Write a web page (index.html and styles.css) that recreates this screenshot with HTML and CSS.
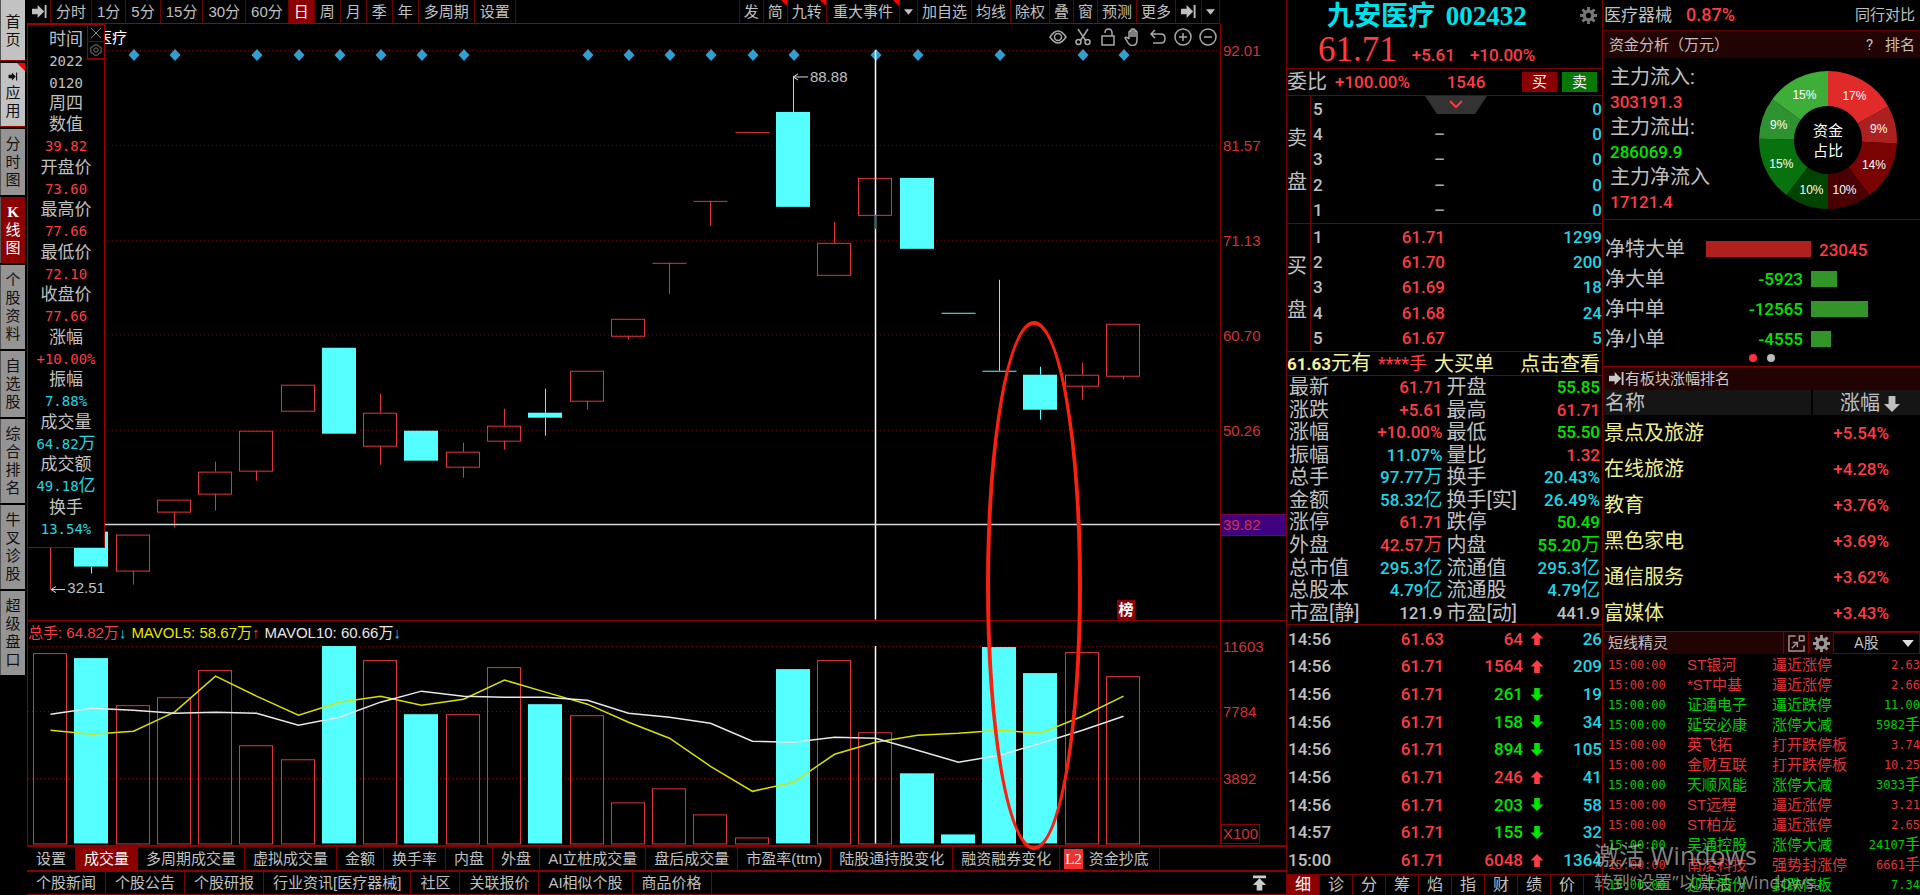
FILE: index.html
```html
<!DOCTYPE html>
<html lang="zh-CN">
<head>
<meta charset="utf-8">
<title>九安医疗 002432</title>
<link rel="stylesheet" href="styles.css">
</head>
<body>
<svg class="defs" aria-hidden="true">
  <symbol id="skip" viewBox="0 0 18 16"><path d="M1 5h6V1l7 7-7 7v-4H1z" fill="currentColor"/><path d="M15.500 1v14" stroke="currentColor" stroke-width="2"/></symbol>
  <symbol id="down" viewBox="0 0 10 6"><path d="M0 0h10L5 6z" fill="currentColor"/></symbol>
  <symbol id="gear" viewBox="0 0 18 18"><circle cx="9" cy="9" r="4.500" fill="none" stroke="currentColor" stroke-width="3.400"/><path d="M9 0v4M9 14v4M0 9h4M14 9h4M2.600 2.600l3 3M12.400 12.400l3 3M2.600 15.400l3-3M12.400 5.600l3-3" stroke="currentColor" stroke-width="3"/></symbol>
  <symbol id="up-arrow" viewBox="0 0 14 14"><path d="M7 0l7 7h-4v7H4V7H0z" fill="currentColor"/></symbol>
  <symbol id="down-arrow" viewBox="0 0 14 14"><path d="M7 14l7-7h-4V0H4v7H0z" fill="currentColor"/></symbol>
</svg>
<div class="app">
  <nav class="side">
    <a href="#" class="light home"><span>首页</span></a>
    <a href="#" class="light apps"><svg class="mini"><use href="#skip"/></svg><span>应用</span></a>
    <a href="#"><span>分时图</span></a>
    <a href="#" class="active"><span><b>K</b>线图</span></a>
    <a href="#"><span>个股资料</span></a>
    <a href="#"><span>自选股</span></a>
    <a href="#"><span>综合排名</span></a>
    <a href="#"><span>牛叉诊股</span></a>
    <a href="#"><span>超级盘口</span></a>
  </nav>

  <main class="main">
    <div class="toolbar">
      <div class="group">
        <button class="first" aria-label="展开"><svg class="i-skip"><use href="#skip"/></svg></button>
        <button>分时</button><button>1分</button><button>5分</button><button>15分</button><button>30分</button><button>60分</button><button class="active">日</button><button>周</button><button>月</button><button>季</button><button>年</button><button>多周期</button><button>设置</button>
      </div>
      <div class="group tight">
        <button>发</button><button class="hot">简</button><button class="hot">九转</button><button class="hot wide">重大事件</button><button aria-label="事件菜单"><svg class="i-down"><use href="#down"/></svg></button><button>加自选</button><button>均线</button><button>除权</button><button>叠</button><button>窗</button><button>预测</button><button>更多</button><button aria-label="收起"><svg class="i-skip"><use href="#skip"/></svg></button><button aria-label="更多菜单"><svg class="i-down"><use href="#down"/></svg></button>
      </div>
    </div>

    <div class="charts">
      <section class="pane price">
        <div class="plot">
          <svg id="price" class="canvas" viewBox="28 24 1192 596" preserveAspectRatio="none"></svg>
          <div class="stock-name">九安医疗</div>
          <div class="tools">
            <button aria-label="显示"><svg viewBox="0 0 18 18"><path d="M1 9q8-12 16 0q-8 12-16 0z"/><circle cx="9" cy="9" r="3.500"/></svg></button>
            <button aria-label="剪切"><svg viewBox="0 0 18 18"><path d="M4 1l8 12M14 1L6 13"/><circle cx="4.500" cy="14" r="2.500"/><circle cx="13.500" cy="14" r="2.500"/></svg></button>
            <button aria-label="锁定"><svg viewBox="0 0 18 18"><path d="M3 8h12v9H3zM6 5q0-4 3.500-4T13 5v3"/></svg></button>
            <button aria-label="拖动"><svg viewBox="0 0 18 18"><path d="M5 11V4q1-2 2 0v5V2q1-2 2 0v7V2q1-2 2 0v7V4q1-2 2 0v8q0 5-4 5.500Q5 18 3 13L1 10q1-2 4 1"/></svg></button>
            <button aria-label="撤销"><svg viewBox="0 0 18 18"><path d="M6 2L2 6l4 4M2 6h10q4 0 4 4.500T12 15H4"/></svg></button>
            <button aria-label="放大"><svg viewBox="0 0 18 18"><circle cx="9" cy="9" r="8"/><path d="M9 5v8M5 9h8"/></svg></button>
            <button aria-label="缩小"><svg viewBox="0 0 18 18"><circle cx="9" cy="9" r="8"/><path d="M5 9h8"/></svg></button>
          </div>
          <span class="mark high">88.88</span>
          <span class="mark low">32.51</span>
          <span class="badge">榜</span>
          <aside class="info">
            <div class="info-btns"><button aria-label="关闭"><svg viewBox="0 0 12 12"><path d="M1 1l10 10M11 1L1 11"/></svg></button><button aria-label="面板设置"><svg viewBox="0 0 14 14"><path d="M5 1h4l1 2 3 1v6l-3 1-1 2H5l-1-2-3-1V4l3-1z"/><circle cx="7" cy="7" r="2.500"/></svg></button></div>
            <span>时间</span><span class="n">2022</span><span class="n">0120</span><span>周四</span>
            <span>数值</span><span class="n r">39.82</span>
            <span>开盘价</span><span class="n r">73.60</span>
            <span>最高价</span><span class="n r">77.66</span>
            <span>最低价</span><span class="n r">72.10</span>
            <span>收盘价</span><span class="n r">77.66</span>
            <span>涨幅</span><span class="n r">+10.00%</span>
            <span>振幅</span><span class="n c">7.88%</span>
            <span>成交量</span><span class="n c">64.82<i>万</i></span>
            <span>成交额</span><span class="n c">49.18<i>亿</i></span>
            <span>换手</span><span class="n c">13.54%</span>
          </aside>
        </div>
        <div class="axis" id="price-axis"></div>
      </section>
      <section class="pane volume">
        <div class="plot">
          <svg id="volume" class="canvas" viewBox="28 621 1192 224" preserveAspectRatio="none"></svg>
          <div class="legend"><span class="r">总手: 64.82万<i class="c">↓</i></span><span class="y">MAVOL5: 58.67万<i class="r">↑</i></span><span class="w">MAVOL10: 60.66万<i class="c">↓</i></span></div>
        </div>
        <div class="axis" id="volume-axis"><span class="unit">X100</span></div>
      </section>
      <div class="ring"></div>
    </div>

    <nav class="tabs indicators">
      <button>设置</button><button class="active">成交量</button><button>多周期成交量</button><button>虚拟成交量</button><button>金额</button><button>换手率</button><button>内盘</button><button>外盘</button><button>AI立桩成交量</button><button>盘后成交量</button><button>市盈率(ttm)</button><button>陆股通持股变化</button><button>融资融券变化</button><button class="l2"><em>L2</em>资金抄底</button>
    </nav>
    <nav class="tabs news">
      <a href="#">个股新闻</a><a href="#">个股公告</a><a href="#">个股研报</a><a href="#">行业资讯[医疗器械]</a><a href="#">社区</a><a href="#">关联报价</a><a href="#">AI相似个股</a><a href="#">商品价格</a>
      <button class="top" aria-label="展开面板"><svg viewBox="0 0 16 16"><path d="M1 0h14v3H1zM8 3l7 7h-4v6H5v-6H1z" fill="currentColor"/></svg></button>
    </nav>
  </main>

  <section class="quote">
    <header>
      <h1>九安医疗 <span>002432</span></h1>
      <button class="gear" aria-label="设置"><svg><use href="#gear"/></svg></button>
      <p class="last"><strong>61.71</strong><span>+5.61</span><span>+10.00%</span></p>
    </header>
    <div class="ratio"><span class="lbl">委比</span><b>+100.00%</b><b class="cnt">1546</b><button class="buy">买</button><button class="sell">卖</button></div>
    <div class="depth">
      <div class="side-lbl"><span>卖</span><span>盘</span></div>
      <table>
        <tr><th>5</th><td></td><td>0</td></tr>
        <tr><th>4</th><td class="dash">–</td><td>0</td></tr>
        <tr><th>3</th><td class="dash">–</td><td>0</td></tr>
        <tr><th>2</th><td class="dash">–</td><td>0</td></tr>
        <tr><th>1</th><td class="dash">–</td><td>0</td></tr>
      </table>
      <button class="fold" aria-label="展开卖盘"><svg viewBox="0 0 62 18"><path d="M0 0h62L50 18H12z" fill="#333"/><path d="M25 5l6 6 6-6" fill="none" stroke="#ff3a3a" stroke-width="2"/></svg></button>
    </div>
    <div class="depth">
      <div class="side-lbl"><span>买</span><span>盘</span></div>
      <table>
        <tr><th>1</th><td>61.71</td><td>1299</td></tr>
        <tr><th>2</th><td>61.70</td><td>200</td></tr>
        <tr><th>3</th><td>61.69</td><td>18</td></tr>
        <tr><th>4</th><td>61.68</td><td>24</td></tr>
        <tr><th>5</th><td>61.67</td><td>5</td></tr>
      </table>
    </div>
    <div class="promo"><span><b>61.63</b>元有</span><span class="r">****手</span><span>大买单</span><a href="#">点击查看</a></div>
    <table class="stats">
      <tr><th>最新</th><td class="r">61.71</td><th>开盘</th><td class="g">55.85</td></tr>
      <tr><th>涨跌</th><td class="r">+5.61</td><th>最高</th><td class="r">61.71</td></tr>
      <tr><th>涨幅</th><td class="r">+10.00%</td><th>最低</th><td class="g">55.50</td></tr>
      <tr><th>振幅</th><td class="c">11.07%</td><th>量比</th><td class="r">1.32</td></tr>
      <tr><th>总手</th><td class="c">97.77<i>万</i></td><th>换手</th><td class="c">20.43%</td></tr>
      <tr><th>金额</th><td class="c">58.32<i>亿</i></td><th>换手[实]</th><td class="c">26.49%</td></tr>
      <tr><th>涨停</th><td class="r">61.71</td><th>跌停</th><td class="g">50.49</td></tr>
      <tr><th>外盘</th><td class="r">42.57<i>万</i></td><th>内盘</th><td class="g">55.20<i>万</i></td></tr>
      <tr><th>总市值</th><td class="c">295.3<i>亿</i></td><th>流通值</th><td class="c">295.3<i>亿</i></td></tr>
      <tr><th>总股本</th><td class="c">4.79<i>亿</i></td><th>流通股</th><td class="c">4.79<i>亿</i></td></tr>
      <tr><th>市盈[静]</th><td>121.9</td><th>市盈[动]</th><td>441.9</td></tr>
    </table>
    <table class="ticks">
      <tr><td>14:56</td><td>61.63</td><td class="r">64</td><td class="r"><svg><use href="#up-arrow"/></svg></td><td>26</td></tr>
      <tr><td>14:56</td><td>61.71</td><td class="r">1564</td><td class="r"><svg><use href="#up-arrow"/></svg></td><td>209</td></tr>
      <tr><td>14:56</td><td>61.71</td><td class="g">261</td><td class="g"><svg><use href="#down-arrow"/></svg></td><td>19</td></tr>
      <tr><td>14:56</td><td>61.71</td><td class="g">158</td><td class="g"><svg><use href="#down-arrow"/></svg></td><td>34</td></tr>
      <tr><td>14:56</td><td>61.71</td><td class="g">894</td><td class="g"><svg><use href="#down-arrow"/></svg></td><td>105</td></tr>
      <tr><td>14:56</td><td>61.71</td><td class="r">246</td><td class="r"><svg><use href="#up-arrow"/></svg></td><td>41</td></tr>
      <tr><td>14:56</td><td>61.71</td><td class="g">203</td><td class="g"><svg><use href="#down-arrow"/></svg></td><td>58</td></tr>
      <tr><td>14:57</td><td>61.71</td><td class="g">155</td><td class="g"><svg><use href="#down-arrow"/></svg></td><td>32</td></tr>
      <tr><td>15:00</td><td>61.71</td><td class="r">6048</td><td class="r"><svg><use href="#up-arrow"/></svg></td><td>1364</td></tr>
    </table>
    <nav class="qtabs"><button class="active">细</button><button>诊</button><button>分</button><button>筹</button><button>焰</button><button>指</button><button>财</button><button>绩</button><button>价</button></nav>
  </section>

  <section class="market">
    <div class="sector"><span>医疗器械</span><b>0.87%</b><a href="#">同行对比</a></div>
    <div class="bar-head fund-head"><span>资金分析（万元）</span><span class="help">?</span><a href="#">排名</a></div>
    <div class="fund">
      <dl>
        <dt>主力流入:</dt><dd class="r">303191.3</dd>
        <dt>主力流出:</dt><dd class="g">286069.9</dd>
        <dt>主力净流入</dt><dd class="r">17121.4</dd>
      </dl>
      <svg id="donut" class="donut" viewBox="-70 -70 140 140"></svg>
    </div>
    <div class="net">
      <div><span>净特大单</span><span class="left"><i class="fill red" style="width:105px"></i></span><span class="right"><b class="r">23045</b></span></div>
      <div><span>净大单</span><span class="left"><b class="g">-5923</b></span><span class="right"><i class="fill green" style="width:26px"></i></span></div>
      <div><span>净中单</span><span class="left"><b class="g">-12565</b></span><span class="right"><i class="fill green" style="width:57px"></i></span></div>
      <div><span>净小单</span><span class="left"><b class="g">-4555</b></span><span class="right"><i class="fill green" style="width:20px"></i></span></div>
      <p class="dots"><i class="on"></i><i></i></p>
    </div>
    <div class="bar-head rank-head"><svg class="i-skip"><use href="#skip"/></svg><span>有板块涨幅排名</span></div>
    <table class="rank">
      <thead><tr><th>名称</th><th>涨幅<svg><use href="#down-arrow"/></svg></th></tr></thead>
      <tbody>
      <tr><td>景点及旅游</td><td>+5.54%</td></tr>
      <tr><td>在线旅游</td><td>+4.28%</td></tr>
      <tr><td>教育</td><td>+3.76%</td></tr>
      <tr><td>黑色家电</td><td>+3.69%</td></tr>
      <tr><td>通信服务</td><td>+3.62%</td></tr>
      <tr><td>富媒体</td><td>+3.43%</td></tr>
      </tbody>
    </table>
    <div class="bar-head spirit-head"><span>短线精灵</span>
      <button aria-label="弹出"><svg viewBox="0 0 18 18"><path d="M8 1H1v16h16v-6M12 1h5v5h-5zM4 14l5-5M5 8h5v5" fill="none" stroke="currentColor" stroke-width="1.500"/></svg></button>
      <button aria-label="设置"><svg viewBox="0 0 18 18"><use href="#gear"/></svg></button>
      <label class="pick"><select aria-label="市场"><option>A股</option></select><svg class="i-down"><use href="#down"/></svg></label>
    </div>
    <table class="spirit">
      <tr class="r"><td>15:00:00</td><td>ST银河</td><td>逼近涨停</td><td>2.63</td></tr>
      <tr class="r"><td>15:00:00</td><td>*ST中基</td><td>逼近涨停</td><td>2.66</td></tr>
      <tr class="g"><td>15:00:00</td><td>证通电子</td><td>逼近跌停</td><td>11.00</td></tr>
      <tr class="g"><td>15:00:00</td><td>延安必康</td><td>涨停大减</td><td>5982<i>手</i></td></tr>
      <tr class="r"><td>15:00:00</td><td>英飞拓</td><td>打开跌停板</td><td>3.74</td></tr>
      <tr class="r"><td>15:00:00</td><td>金财互联</td><td>打开跌停板</td><td>10.25</td></tr>
      <tr class="g"><td>15:00:00</td><td>天顺风能</td><td>涨停大减</td><td>3033<i>手</i></td></tr>
      <tr class="r"><td>15:00:00</td><td>ST远程</td><td>逼近涨停</td><td>3.21</td></tr>
      <tr class="r"><td>15:00:00</td><td>ST柏龙</td><td>逼近涨停</td><td>2.65</td></tr>
      <tr class="g"><td>15:00:00</td><td>吴通控股</td><td>涨停大减</td><td>24107<i>手</i></td></tr>
      <tr class="r"><td>15:00:00</td><td>南凌科技</td><td>强势封涨停</td><td>6661<i>手</i></td></tr>
      <tr class="g"><td>15:00:00</td><td>迎丰股份</td><td>封跌停板</td><td>7.34</td></tr>
    </table>
    <div class="watermark"><p>激活 Windows</p><p class="sub">转到“设置”以激活 Windows。</p></div>
  </section>
</div>
<script src="chart.js"></script>
</body>
</html>
```
FILE: styles.css
```css
* { box-sizing: border-box; }
body { margin: 0; background: #000; color: #c0c0c0; font-family: "Liberation Sans", "Noto Sans CJK SC", sans-serif; font-size: 15px; line-height: 20px; }
button, select { font: inherit; color: inherit; background: none; border: 0; border-radius: 0; padding: 0; margin: 0; }
a { color: inherit; text-decoration: none; }
p, h1, dl, dd { margin: 0; }
i, em { font-style: normal; }
table { border-collapse: collapse; width: 100%; }
th, td { padding: 0; font-weight: normal; text-align: left; }
svg { display: block; }
.defs { position: absolute; width: 0; height: 0; }
.r { color: #ff3b44; }
.g { color: #00e600; }
.c { color: #1fd6e6; }
.y { color: #e8e800; }
.w { color: #e8e8e8; }

.app { display: grid; grid-template-columns: 27px minmax(0, 1fr) 317px 317px; height: 100vh; min-height: 895px; overflow: hidden; }

/* left navigation */
.side { display: flex; flex-direction: column; gap: 2px; width: 25px; }
.side a { position: relative; display: flex; flex-direction: column; align-items: center; padding: 6px 0; background: #949494; color: #111; border-left: 1px solid #555; }
.side span { width: 16px; line-height: 18px; word-break: break-all; text-align: center; }
.side a.light { background: #c2c2c2; border-bottom: 1px solid #900; }
.side a.home { padding: 13px 0 11px; }
.side a.active { background: #8b0000; color: #fff; }
.side b { font-family: "Liberation Serif", serif; }
.side .apps::after { content: ""; position: absolute; top: 0; right: 0; border: 4px solid; border-color: #f00 #f00 transparent transparent; }
.mini { width: 10px; height: 9px; margin: 3px 0; }

/* period toolbar */
.main { display: flex; flex-direction: column; min-width: 0; }
.toolbar { display: flex; justify-content: space-between; height: 24px; margin-right: 66px; border-bottom: 1px solid #a00000; }
.group { display: flex; }
.group button { position: relative; display: flex; align-items: center; padding: 0 5px; border-right: 1px solid #6b0000; white-space: nowrap; }
.group button.first { padding: 0 2px 0 4px; }
.group .active { background: #8b0000; color: #fff; }
.tight { border-left: 1px solid #6b0000; }
.tight button { padding: 0 4px; }
.tight button.wide { padding: 0 6px; }
.hot::after { content: ""; position: absolute; top: 0; right: 0; border: 3px solid; border-color: #f00 #f00 transparent transparent; }
.i-skip { width: 17px; height: 15px; flex: none; }
.i-down { width: 9px; height: 6px; }

/* charts */
.charts { position: relative; flex: 1; display: flex; flex-direction: column; min-height: 0; }
.pane { display: flex; min-height: 0; border-bottom: 1px solid #8b0000; }
.price { flex: 597; }
.volume { flex: 225; border-bottom-width: 2px; }
.plot { position: relative; flex: 1; min-width: 0; border-left: 1px solid #8b0000; }
.canvas { position: absolute; inset: 0; width: 100%; height: 100%; }
.axis { position: relative; width: 66px; border-left: 1px solid #8b0000; color: #d2333b; }
.axis span { position: absolute; left: 0; right: 0; padding-left: 2px; transform: translateY(-50%); }
.axis .cursor { background: #3f0080; border: solid #7c0050; border-width: 1px 0; }
.axis .unit { top: auto; bottom: 1px; right: auto; transform: none; padding: 0 1px; line-height: 18px; border: 1px solid #8b0000; }
.stock-name { position: absolute; left: 39px; top: 4px; color: #fff; }
.tools { position: absolute; top: 4px; right: 3px; display: flex; gap: 7px; }
.tools svg { width: 18px; height: 18px; fill: none; stroke: #a8a8a8; stroke-width: 1.5; }
.mark { position: absolute; }
.mark.high { left: 65.600%; top: 7.200%; }
.mark.low { left: 3.300%; top: 93.100%; }
.badge { position: absolute; left: 91.400%; bottom: 1px; padding: 0 1px; line-height: 19px; background: #8b0000; color: #fff; font-weight: bold; }
.info { position: absolute; left: -1px; top: 0; width: 78px; height: 88%; padding: 5px 0 8px; background: #000; border: 1px solid #a00000; display: flex; flex-direction: column; justify-content: space-between; align-items: center; font-size: 17px; line-height: 20px; }
.info .n { font-family: "DejaVu Sans Mono", "Noto Sans CJK SC", monospace; font-size: 14px; }
.info i { font-size: 17px; line-height: 16px; }
.info-btns { position: absolute; top: 0; right: 0; width: 17px; border: solid #8b0000; border-width: 0 0 1px 1px; background: #000; }
.info-btns button { display: grid; place-items: center; width: 16px; height: 17px; border-bottom: 1px solid #8b0000; }
.info-btns svg { width: 12px; height: 12px; fill: none; stroke: #888; }
.legend { position: absolute; left: 0; top: 2px; display: flex; gap: 5px; }
.ring { position: absolute; left: 76.200%; top: 36.100%; width: 7.600%; height: 64.300%; border: 4px solid #f8200f; border-radius: 50%; pointer-events: none; }

/* bottom tabs */
.tabs { display: flex; border-bottom: 1px solid #8b0000; }
.tabs > * { display: flex; align-items: center; padding: 0 8px; border-right: 1px solid #7a0000; white-space: nowrap; }
.indicators { height: 25px; border-bottom-width: 2px; }
.indicators .active { background: #8b0000; color: #fff; }
.indicators button:first-child { padding: 0 9px; }
.l2 { gap: 6px; }
.l2:last-child { padding: 0 10px 0 4px; }
.l2 em { background: #e33; color: #fff; font-family: "Liberation Serif", serif; padding: 0 1px; }
.news { height: 23px; }
.news a { padding: 0 9px; }
.news .top { margin-left: auto; border: 0; padding-right: 19px; color: #ccc; }
.top svg { width: 15px; height: 16px; }

/* quote column */
.quote { border: solid #7a0000; border-width: 0 1px; display: flex; flex-direction: column; min-width: 0; }
.quote, .market { font-family: Roboto, "Noto Sans CJK SC", sans-serif; }
.quote header { position: relative; height: 69px; border-bottom: 1px solid #7a0000; }
h1 { padding: 0 0 0 40px; font: bold 27px/32px "Liberation Serif", "Noto Sans CJK SC", serif; color: #00e0ea; }
h1 span { margin-left: 4px; }
.gear { position: absolute; right: 5px; top: 7px; color: #777; }
.gear svg { width: 17px; height: 17px; }
.last { display: flex; align-items: baseline; gap: 15px; padding-left: 31px; color: #ff3b44; font-size: 17px; line-height: 36px; font-weight: 500; }
.last strong { font: 35px/36px "Liberation Serif", serif; }
.ratio { display: flex; align-items: center; height: 27px; border-bottom: 1px solid #7a0000; font-size: 17px; }
.ratio b { color: #ff3b44; font-weight: 500; margin-left: 8px; }
.ratio .cnt { margin: 0 auto; }
.ratio .lbl { font-size: 20px; }
.ratio button { width: 35px; height: 20px; color: #fff; font-size: 15px; margin-right: 5px; }
.ratio .buy { background: #8b0000; }
.ratio .sell { background: #087808; }
.depth { position: relative; display: flex; height: 128px; border-bottom: 1px solid #7a0000; }
.side-lbl { display: flex; flex-direction: column; justify-content: center; gap: 24px; width: 24px; border-right: 1px solid #7a0000; font-size: 20px; line-height: 20px; }
.depth table { flex: 1; height: 100%; font-size: 17px; }
.depth th { width: 30px; padding-left: 2px; font-weight: 500; }
.depth td { width: 104px; text-align: right; color: #ff3b44; font-weight: 500; }
.depth td:last-child { width: auto; color: #1fd6e6; }
.depth .dash { color: #aaa; }
.fold { position: absolute; left: 138px; top: 0; }
.fold svg { width: 62px; height: 18px; }
.promo { display: flex; align-items: center; gap: 7px; height: 24px; border-bottom: 1px solid #7a0000; color: #f2f29a; font-size: 20px; white-space: nowrap; }
.promo b { font-size: 17px; font-weight: 700; }
.promo .r { font-size: 18px; }
.promo a { margin-left: auto; padding-right: 2px; }
.stats { height: 249px; table-layout: fixed; border-bottom: 1px solid #7a0000; font-size: 17px; }
.stats th { font-size: 20px; line-height: 20px; padding-left: 2px; white-space: nowrap; }
.stats td { text-align: right; font-weight: 500; line-height: 20px; padding-right: 2px; white-space: nowrap; }
.stats i { font-size: 19px; font-weight: 400; }
.ticks { table-layout: fixed; font-size: 17px; height: 249px; }
.ticks td { text-align: right; font-weight: 500; }
.ticks td:first-child { text-align: left; padding-left: 1px; width: 90px; }
.ticks td:nth-child(2) { width: 67px; color: #ff3b44; }
.ticks td:nth-child(3) { width: 79px; }
.ticks td:nth-child(4) { width: 21px; }
.ticks td:last-child { color: #1fd6e6; }
.ticks svg { width: 14px; height: 13px; margin-left: auto; }
.qtabs { display: flex; flex: 1; border-top: 1px solid #7a0000; font-size: 16px; }
.qtabs button { width: 33px; border-right: 1px solid #7a0000; line-height: 20px; }
.qtabs .active { background: #8b0000; color: #fff; }

/* market column */
.market { position: relative; display: flex; flex-direction: column; min-width: 0; padding-left: 1px; }
.market b { font-weight: 500; }
.sector { display: flex; align-items: center; gap: 14px; height: 31px; font-size: 17px; border-bottom: 1px solid #5a0000; }
.sector b { color: #ff3b44; font-size: 18px; }
.sector a { margin-left: auto; padding-right: 5px; font-size: 15px; }
.bar-head { display: flex; align-items: center; background: #220304; }
.fund-head { height: 27px; padding: 0 5px; }
.help { margin-left: auto; margin-right: 12px; }
.fund { display: flex; justify-content: space-between; height: 162px; padding: 7px 22px 0 6px; border-bottom: 1px solid #222; }
.fund dt { font-size: 20px; line-height: 25px; }
.fund dd { font-size: 17px; line-height: 25px; font-weight: 500; }
.donut { width: 140px; height: 140px; margin-top: 5px; }
.donut text { fill: #fff; text-anchor: middle; font: 12px "Liberation Sans", sans-serif; }
.donut .center { font: 15px "Noto Sans CJK SC", sans-serif; }
.net { height: 147px; padding-top: 14px; border-bottom: 1px solid #8b0000; }
.net div { display: flex; align-items: center; height: 30px; font-size: 20px; }
.net div > span:first-child { width: 100px; padding-left: 1px; }
.net .left { display: flex; justify-content: flex-end; width: 107px; }
.net b { font-size: 17px; margin: 0 8px; }
.fill { display: block; height: 16px; }
.red { background: #b0211d; }
.green { background: #339429; }
.dots { display: flex; justify-content: center; gap: 10px; }
.dots i { width: 8px; height: 8px; border-radius: 50%; background: #bbb; }
.dots .on { background: #ff3040; }
.rank-head { height: 23px; padding-left: 4px; color: #c8c8c8; }
.rank { font-size: 20px; }
.rank thead { background: #151515; }
.rank thead th { height: 25px; padding-left: 1px; }
.rank th:last-child { width: 108px; border-left: 2px solid #000; padding-left: 27px; }
.rank th svg { display: inline-block; width: 16px; height: 16px; margin-left: 4px; vertical-align: -2px; }
.rank tbody td { height: 36px; color: #eded92; }
.rank tbody td:last-child { text-align: right; padding-right: 31px; color: #ff3b44; font-size: 17px; font-weight: 500; }
.spirit-head { height: 23px; border-top: 1px solid #8b0000; padding-left: 4px; }
.spirit-head button { display: grid; place-items: center; width: 25px; height: 22px; border-left: 1px solid #7a0000; color: #999; }
.spirit-head span { margin-right: auto; }
.spirit-head button svg { width: 17px; height: 17px; }
.pick { position: relative; display: flex; align-items: center; width: 87px; height: 22px; border: 1px solid #7a0000; background: #000; padding-right: 4px; }
.pick select { flex: 1; appearance: none; padding-left: 20px; }
.pick .i-down { width: 14px; height: 7px; color: #ddd; }
.spirit { table-layout: fixed; font-family: "DejaVu Sans Mono", "Noto Sans CJK SC", monospace; font-size: 15px; margin-top: 1px; }
.spirit td { height: 20px; line-height: 20px; white-space: nowrap; }
.spirit tr.r { color: #e0343c; }
.spirit tr.g { color: #00cc00; }
.spirit td:first-child { width: 83px; padding-left: 4px; font-size: 12px; }
.spirit td:nth-child(2) { width: 85px; font-family: "Liberation Sans", "Noto Sans CJK SC", sans-serif; }
.spirit td:nth-child(3) { width: 78px; }
.spirit td:last-child { text-align: right; font-size: 12px; }
.spirit i { font-size: 15px; line-height: 16px; }
.watermark { position: absolute; left: -9px; bottom: 1px; color: rgba(175, 175, 175, .75); font-family: "Open Sans", "Noto Sans CJK SC", sans-serif; font-size: 25px; line-height: 30px; white-space: nowrap; pointer-events: none; }
.watermark .sub { font-size: 18px; line-height: 24px; }
```
FILE: chart.js
```javascript
const X0 = 50.5, STEP = 41.27, HALF = 17;
const UP = '#e0343c', DOWN = '#55ffff';
const cx = i => Math.round(X0 + i * STEP - 0.5) + 0.5;

// [rising, top, bottom, high, low] in plot units
const candles = [
  [1, 520, 540, 520, 590], [0, 532, 567, 532, 574], [1, 535, 571, 535, 585], [1, 500, 512, 500, 528],
  [1, 472, 494, 462, 511], [1, 431, 471, 431, 481], [1, 385, 411, 385, 411], [0, 348, 434, 348, 434],
  [1, 413, 446, 394, 465], [0, 431, 461, 431, 461], [1, 452, 467, 443, 478], [1, 426, 441, 409, 450],
  [0, 413, 418, 389, 436], [1, 371, 401, 371, 410], [1, 319, 336, 319, 340], [1, 263, 263, 263, 294],
  [1, 201, 201, 201, 226], [1, 132, 132, 132, 132], [0, 112, 207, 77, 207], [1, 243, 275, 222, 275],
  [1, 178, 215, 178, 215], [0, 178, 249, 178, 249], [0, 313, 313, 313, 313], [0, 371, 371, 280, 371],
  [0, 375, 410, 367, 420], [1, 375, 386, 363, 400], [1, 324, 376, 324, 380]
];
const volumes = [653, 658, 705, 697, 670, 745, 759, 646, 660, 714, 714, 667, 704, 715, 802, 788, 814, 837, 669, 660, 732, 773, 834, 647, 673, 652, 676];
const ma5 = [730, 734, 731, 712, 676, 696, 715, 702, 696, 705, 699, 680, 692, 704, 722, 738, 766, 791, 782, 754, 742, 735, 733, 730, 733, 716, 696];
const ma10 = [714, 708, 710, 713, 712, 713, 725, 717, 702, 691, 696, 697, 697, 700, 713, 717, 723, 741, 742, 737, 738, 750, 762, 755, 743, 730, 716];
const events = [2, 3, 5, 6, 7, 8, 9, 10, 13, 14, 15, 16, 17, 18, 20, 21, 23, 25, 26];

const line = (x1, y1, x2, y2, c, extra = '') =>
  `<line x1="${x1}" y1="${y1}" x2="${x2}" y2="${y2}" stroke="${c}" shape-rendering="crispEdges" ${extra}/>`;
const grid = y => line(28, y + 0.5, 1220, y + 0.5, '#6a0000', 'stroke-dasharray="1 3"');
const box = (i, top, bottom, up) => up
  ? `<rect x="${cx(i) - HALF}" y="${top + 0.5}" width="${HALF * 2 - 1}" height="${bottom - top}" fill="none" stroke="${UP}"/>`
  : `<rect x="${cx(i) - HALF - 0.5}" y="${top}" width="${HALF * 2}" height="${bottom - top}" fill="${DOWN}"/>`;

let p = [50, 145, 240, 335, 430].map(grid).join('');
candles.forEach(([up, top, bottom, high, low], i) => {
  const c = up ? UP : DOWN, x = cx(i);
  if (high < top) p += line(x, high, x, top, c);
  if (low > bottom) p += line(x, bottom, x, low, c);
  p += top === bottom ? line(x - HALF, top + 0.5, x + HALF, top + 0.5, c) : box(i, top, bottom, up);
});
events.forEach(i => { p += `<path d="M${cx(i) + 0.5} 49l5.500 6-5.500 6-5.500-6z" fill="#309fcf"/>`; });
p += '<path d="M875.5 50V620" stroke="#fff" stroke-width="1.500"/><path d="M875.5 215V229" stroke="#087878" stroke-width="1.500"/>';
p += '<path d="M28 525H1220" stroke="#d0dada" stroke-width="1.500"/>';
p += '<path d="M793 77h15M798 74l-5 3 5 3M51 590h14M56 587l-5 3 5 3" fill="none" stroke="#ddd"/>';
document.getElementById('price').innerHTML = p;

let v = [646, 711, 778].map(grid).join('');
volumes.forEach((top, i) => { v += box(i, top, 843, candles[i][0]); });
v += '<path d="M875.5 646V843" stroke="#fff" stroke-width="1.500"/>';
const path = (ys, c) => `<polyline points="${ys.map((y, i) => cx(i) + ',' + y).join(' ')}" fill="none" stroke="${c}" stroke-width="1.500"/>`;
v += path(ma5, '#d8e000') + path(ma10, '#e8e8e8');
document.getElementById('volume').innerHTML = v;

const labels = (id, rows, top, height) => {
  document.getElementById(id).insertAdjacentHTML('beforeend', rows.map(([t, y]) =>
    `<span class="${t === '39.82' ? 'cursor' : ''}" style="top:${((y - top) / height * 100).toFixed(2)}%">${t}</span>`).join(''));
};
labels('price-axis', [['92.01', 51], ['81.57', 146], ['71.13', 241], ['60.70', 336], ['50.26', 431], ['39.82', 525]], 24, 596);
labels('volume-axis', [['11603', 647], ['7784', 712], ['3892', 779]], 621, 224);

// capital share ring: [label, end angle, colour]
const slices = [['17%', 61, '#e12a2a'], ['9%', 93, '#ac2020'], ['14%', 143, '#7a0404'], ['10%', 180, '#480000'],
  ['10%', 217, '#004400'], ['15%', 271, '#08720f'], ['9%', 306, '#2f9230'], ['15%', 360, '#3fae38']];
const pt = (r, a) => `${(r * Math.sin(a * Math.PI / 180)).toFixed(1)} ${(-r * Math.cos(a * Math.PI / 180)).toFixed(1)}`;
let from = 0, d = '';
slices.forEach(([t, to, c]) => {
  d += `<path d="M${pt(69, from)}A69 69 0 0 1 ${pt(69, to)}L${pt(34, to)}A34 34 0 0 0 ${pt(34, from)}z" fill="${c}"/>`;
  const [x, y] = pt(52, (from + to) / 2).split(' ').map(Number);
  d += `<text x="${x}" y="${y + 5}">${t}</text>`;
  from = to;
});
d += '<text class="center" x="0" y="-4">资金</text><text class="center" x="0" y="16">占比</text>';
document.getElementById('donut').innerHTML = d;
```
